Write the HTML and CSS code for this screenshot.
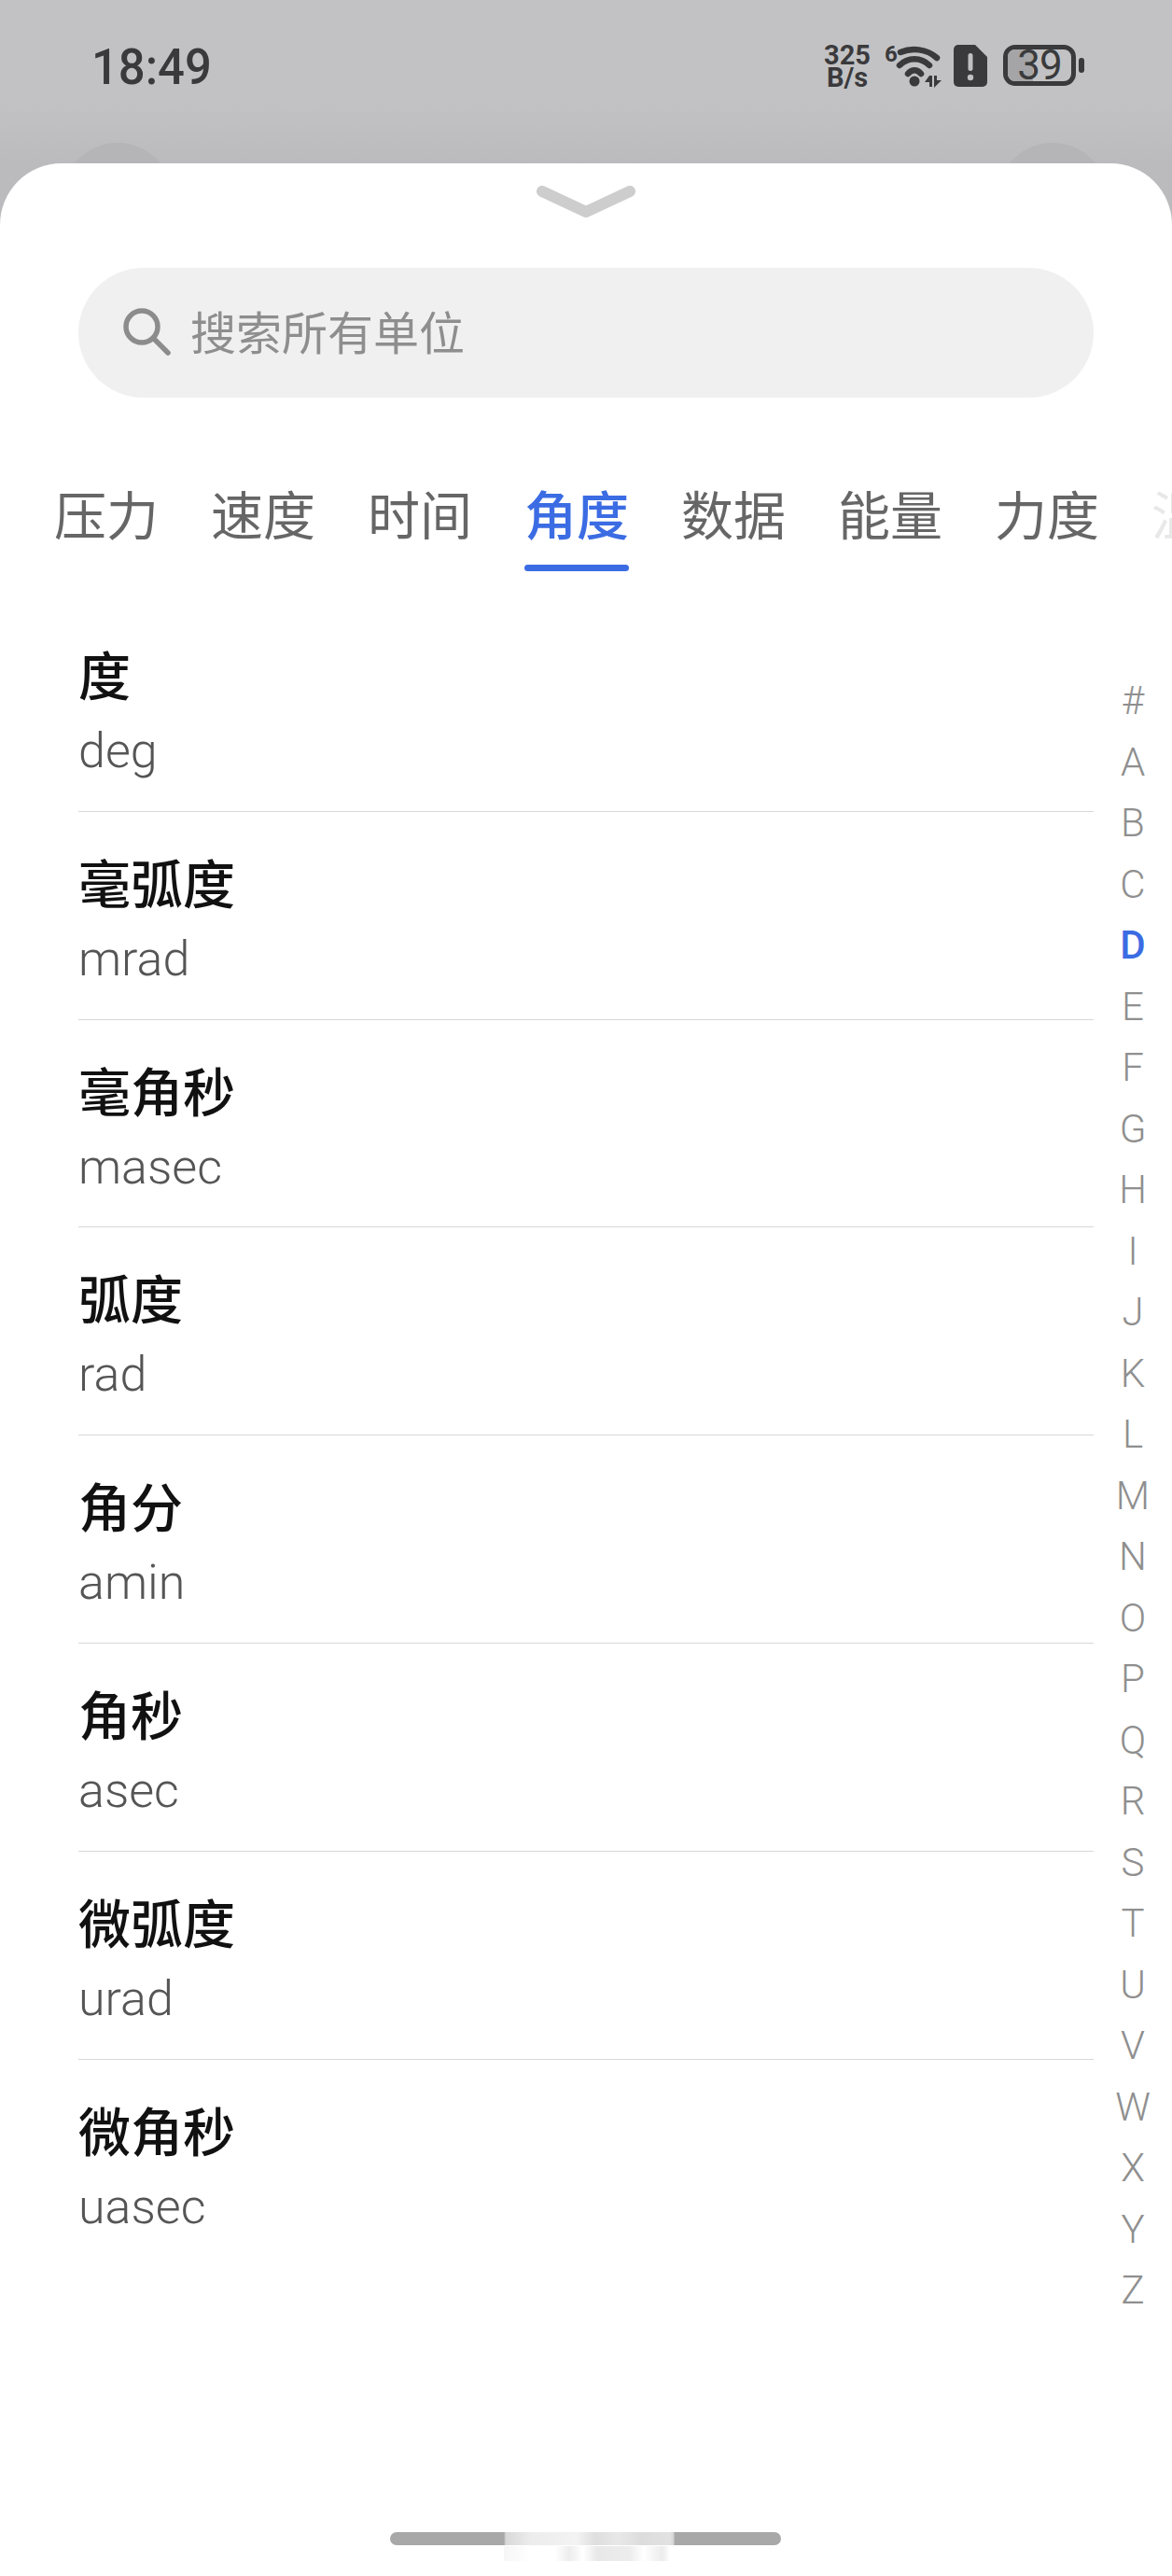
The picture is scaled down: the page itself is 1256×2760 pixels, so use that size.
FILE: index.html
```html
<!DOCTYPE html>
<html lang="zh-CN">
<head>
<meta charset="utf-8">
<title>单位选择</title>
<link rel="stylesheet" href="styles.css">
</head>
<body>
<div class="screen">
  <div class="backdrop-dot dot-left"></div>
  <div class="backdrop-dot dot-right"></div>
  <header class="statusbar">
    <span class="time">18:49</span>
    <div class="status-icons">
      <div class="speed"><span>325</span><span>B/s</span></div>
      <svg class="wifi" width="62" height="46" viewBox="0 0 62 46">
        <text x="0" y="18" class="wifi-six">6</text>
        <path d="M17 8C29 3 45 4 56 14" class="arc"/>
        <path d="M16 22C25 13 39 13 48 22" class="arc"/>
        <path d="M25 31C29 26 35 26 39 31" class="arc"/>
        <circle cx="32" cy="39" r="5.500" class="solid"/>
        <path d="M48 33h3v12h-3v-5h-5zM53 33h3v5h5l-8 8z" class="solid"/>
      </svg>
      <svg class="sim" width="36" height="45" viewBox="0 0 36 45">
        <path d="M5 0H23L36 13V40A5 5 0 0 1 31 45H5A5 5 0 0 1 0 40V5A5 5 0 0 1 5 0Z" class="solid"/>
        <rect x="15.500" y="9" width="5" height="19" rx="2.500" class="cut"/>
        <circle cx="18" cy="35" r="3.200" class="cut"/>
      </svg>
      <div class="battery">
        <div class="battery-body"><span class="battery-level"></span><span class="battery-num">39</span></div>
        <span class="battery-cap"></span>
      </div>
    </div>
  </header>

  <main class="sheet">
    <svg class="handle" width="106" height="34" viewBox="0 0 106 34">
      <path d="M6 6L53 28L100 6"/>
    </svg>

    <div class="search">
      <svg class="search-icon" width="52" height="52" viewBox="0 0 52 52">
        <circle cx="21" cy="21" r="17"/>
        <path d="M33.500 33.500L49 49"/>
      </svg>
      <span class="search-text">搜索所有单位</span>
    </div>

    <nav class="tabs">
      <span class="tab">压力</span>
      <span class="tab">速度</span>
      <span class="tab">时间</span>
      <span class="tab active">角度</span>
      <span class="tab">数据</span>
      <span class="tab">能量</span>
      <span class="tab">力度</span>
      <span class="tab">温度</span>
    </nav>

    <div class="content">
      <ul class="units">
        <li class="unit"><span class="unit-name">度</span><span class="unit-code">deg</span></li>
        <li class="unit"><span class="unit-name">毫弧度</span><span class="unit-code">mrad</span></li>
        <li class="unit"><span class="unit-name">毫角秒</span><span class="unit-code">masec</span></li>
        <li class="unit"><span class="unit-name">弧度</span><span class="unit-code">rad</span></li>
        <li class="unit"><span class="unit-name">角分</span><span class="unit-code">amin</span></li>
        <li class="unit"><span class="unit-name">角秒</span><span class="unit-code">asec</span></li>
        <li class="unit"><span class="unit-name">微弧度</span><span class="unit-code">urad</span></li>
        <li class="unit"><span class="unit-name">微角秒</span><span class="unit-code">uasec</span></li>
      </ul>
      <ol class="alpha">
        <li>#</li><li>A</li><li>B</li><li>C</li><li class="current">D</li><li>E</li><li>F</li><li>G</li><li>H</li><li>I</li><li>J</li><li>K</li><li>L</li><li>M</li><li>N</li><li>O</li><li>P</li><li>Q</li><li>R</li><li>S</li><li>T</li><li>U</li><li>V</li><li>W</li><li>X</li><li>Y</li><li>Z</li>
      </ol>
    </div>

    <div class="home-bar"></div>
  </main>
</div>
</body>
</html>
```

FILE: styles.css
```css
* { box-sizing: border-box; }
html, body { margin: 0; padding: 0; }
body {
  width: 1256px;
  height: 2760px;
  overflow: hidden;
  font-family: "Roboto", "Noto Sans CJK SC", sans-serif;
  background: #bfbfc1;
}
.screen {
  position: relative;
  width: 1256px;
  height: 2760px;
  display: flex;
  flex-direction: column;
  background: linear-gradient(#c2c2c4 0, #c2c2c4 110px, #bbbbbd 175px);
}
.backdrop-dot {
  position: absolute;
  top: 153px;
  width: 118px;
  height: 118px;
  border-radius: 50%;
  background: #b5b5b7;
}
.dot-left { left: 67px; }
.dot-right { left: 1069px; }

.statusbar {
  position: relative;
  height: 175px;
  flex: none;
  display: flex;
  justify-content: space-between;
  align-items: flex-start;
  padding: 47px 94px 0 98px;
  color: #3a3a3c;
}
.time {
  font-size: 54px;
  line-height: 50px;
  font-weight: 500;
  transform: scaleX(0.94);
  transform-origin: left center;
}
.status-icons {
  display: flex;
  align-items: flex-start;
  padding-top: 1px;
}
.speed {
  display: flex;
  flex-direction: column;
  align-items: center;
  width: 50px;
  font-size: 29px;
  line-height: 24px;
  font-weight: 700;
  margin-top: -1px;
}
.wifi { margin-left: 15px; }
.wifi-six { font: 700 24px "Roboto", sans-serif; fill: #3a3a3c; }
.arc { fill: none; stroke: #3a3a3c; stroke-width: 6.500; stroke-linecap: round; }
.solid { fill: #3a3a3c; }
.cut { fill: #c0c0c2; }
.sim { margin-left: 12px; }
.battery {
  display: flex;
  align-items: center;
  margin-left: 17px;
  height: 44px;
}
.battery-body {
  position: relative;
  width: 78px;
  height: 44px;
  border: 5px solid #3a3a3c;
  border-radius: 13px;
  display: flex;
  align-items: center;
  justify-content: center;
}
.battery-level {
  position: absolute;
  inset: 0 auto 0 0;
  width: 27px;
  border-radius: 8px 0 0 8px;
  background: #a5a5a7;
}
.battery-num {
  position: relative;
  font-size: 44px;
  line-height: 34px;
  letter-spacing: -1px;
  color: #3a3a3c;
}
.battery-cap {
  width: 6px;
  height: 16px;
  margin-left: 3px;
  border-radius: 3px;
  background: #3a3a3c;
}

.sheet {
  position: relative;
  flex: 1;
  display: flex;
  flex-direction: column;
  background: #fff;
  border-radius: 66px 66px 0 0;
}
.handle {
  display: block;
  margin: 24px auto 0;
  flex: none;
}
.handle path {
  fill: none;
  stroke: #cdcdcd;
  stroke-width: 12;
  stroke-linecap: round;
  stroke-linejoin: round;
}
.search {
  flex: none;
  margin: 54px 84px 0;
  height: 139px;
  border-radius: 70px;
  background: #f0f0f0;
  display: flex;
  align-items: center;
  padding-left: 47px;
  gap: 21px;
}
.search-icon { margin-top: -3px; }
.search-icon circle, .search-icon path {
  fill: none;
  stroke: #8c8c8c;
  stroke-width: 5.500;
  stroke-linecap: round;
}
.search-text {
  font-size: 49px;
  color: #8e8e8e;
  margin-top: -6px;
}
.tabs {
  flex: none;
  display: flex;
  gap: 56px;
  margin-top: 88px;
  padding: 0 0 0 58px;
  height: 98px;
  overflow: hidden;
  white-space: nowrap;
  -webkit-mask-image: linear-gradient(90deg, #000 1190px, rgba(0,0,0,.15) 1240px);
  mask-image: linear-gradient(90deg, #000 1190px, rgba(0,0,0,.15) 1240px);
}
.tab {
  flex: none;
  position: relative;
  font-size: 56px;
  line-height: 80px;
  color: #666;
}
.tab.active {
  color: #3b6ce3;
  font-weight: 500;
}
.tab.active::after {
  content: "";
  position: absolute;
  left: 0;
  right: 0;
  bottom: 0;
  height: 7px;
  border-radius: 4px;
  background: #3b6ce3;
}
.content {
  flex: 1;
  display: grid;
  grid-template-columns: 1172px 1fr;
  align-items: start;
}
.units {
  list-style: none;
  margin: 35px 0 0;
  padding: 0 0 0 84px;
}
.unit {
  height: 222.800px;
  display: flex;
  flex-direction: column;
  padding-top: 40px;
  border-bottom: 1.500px solid #d8d8d8;
}
.unit:last-child { border-bottom: 0; }
.unit-name {
  font-size: 56px;
  line-height: 78px;
  font-weight: 500;
  color: #111;
}
.unit-code {
  font-size: 52px;
  line-height: 80px;
  font-weight: 300;
  color: #555;
}
.alpha {
  list-style: none;
  margin: 106px 0 0;
  padding: 0;
  text-align: center;
  width: 84px;
}
.alpha li {
  height: 65.500px;
  line-height: 65.500px;
  font-size: 42px;
  font-weight: 300;
  color: #8f8f8f;
}
.alpha li.current {
  color: #3b6ce3;
  font-weight: 500;
}
.home-bar {
  position: absolute;
  left: 418px;
  top: 2538px;
  width: 419px;
  height: 14px;
  border-radius: 7px;
  background: linear-gradient(90deg,
    #a8a8a8 0, #a8a8a8 122px,
    #d8d8d8 124px, #ececec 150px, #f3f3f3 200px, #dedede 220px, #e8e8e8 245px, #dcdcdc 270px, #e2e2e2 300px,
    #d2d2d2 304px, #a8a8a8 305px, #a8a8a8 100%);
}
.home-bar::after {
  content: "";
  position: absolute;
  left: 122px;
  top: 15px;
  width: 180px;
  height: 16px;
  background: linear-gradient(90deg,
    #f6f6f6 0, #fff 28px, #fff 55px, #ededed 70px, #fff 85px, #e8e8e8 100px, #ededed 135px, #fff 150px, #ececec 170px, #fff 178px);
}
```
